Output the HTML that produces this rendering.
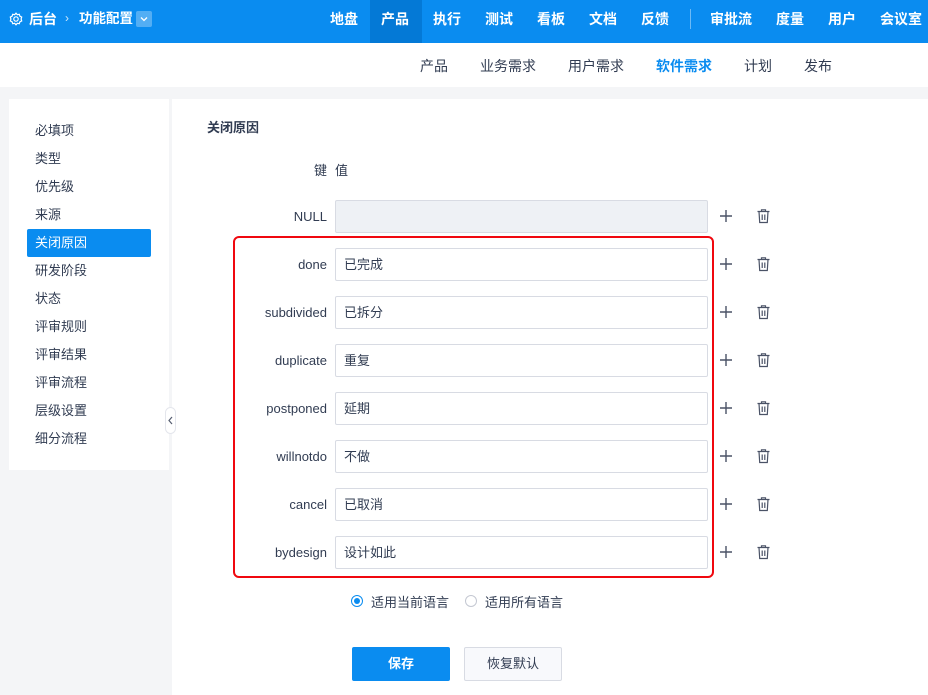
<!DOCTYPE html>
<html><head><meta charset="utf-8">
<style>
*{box-sizing:border-box;margin:0;padding:0}
body{width:928px;height:695px;overflow:hidden;background:#f4f5f7;font-family:"Liberation Sans","Noto Sans CJK SC",sans-serif;font-size:13px;color:#313c52;position:relative}
.abs{position:absolute}
.top{left:0;top:0;width:928px;height:43px;background:#0a8cf0;color:#fff}
.t{position:absolute;top:0;height:43px;line-height:38px;font-size:14px;font-weight:bold;transform:translateX(-50%);white-space:nowrap}
.sub{left:0;top:43px;width:928px;height:44px;background:#fff}
.s{position:absolute;top:0;line-height:46px;font-size:14px;transform:translateX(-50%);color:#313c52;white-space:nowrap}
.side{left:9px;top:99px;width:160px;height:371px;background:#fff}
.si{position:absolute;left:26px;font-size:13px;line-height:20px}
.main{left:172px;top:99px;width:756px;height:596px;background:#fff}
.lbl{position:absolute;right:601px;font-size:13px;text-align:right;line-height:33px;height:33px}
.inp{position:absolute;left:335px;width:373px;height:33px;border:1px solid #d8dbe3;border-radius:2px;padding-left:8px;line-height:31px;font-size:13px;background:#fff}
.plus{position:absolute;left:719px;width:14px;height:14px}
.trash{position:absolute;left:756px;width:15px;height:16px}
</style></head><body>
<div class="abs top">
  <svg class="abs" style="left:9px;top:12px" width="14" height="14" viewBox="0 0 14 14" fill="none" stroke="#fff" stroke-width="1.2"><circle cx="7" cy="7" r="2.2"/><path d="M7 1.2l1.3 1.5 2-.4.6 1.9 1.8.9-.6 1.9.6 1.9-1.8.9-.6 1.9-2-.4L7 12.8 5.7 11.3l-2 .4-.6-1.9-1.8-.9.6-1.9-.6-1.9 1.8-.9.6-1.9 2 .4z"/></svg>
  <div class="abs" style="left:29px;top:0;line-height:38px;font-size:14px;font-weight:bold">后台</div>
  <div class="abs" style="left:65px;top:0;line-height:37px;font-size:12px;opacity:.8">&#x203A;</div>
  <div class="abs" style="left:79px;top:0;line-height:38px;font-size:13.5px;font-weight:bold">功能配置</div>
  <div class="abs" style="left:136px;top:11px;width:16px;height:16px;background:rgba(255,255,255,.3);border-radius:2px"><svg width="16" height="16" viewBox="0 0 16 16"><path d="M5 6.5l3 3 3-3" stroke="#fff" stroke-width="1.3" fill="none"/></svg></div>
  <div class="abs" style="left:370px;top:0;width:52px;height:43px;background:#0479d6"></div>
  <div class="t" style="left:344px">地盘</div>
  <div class="t" style="left:395px">产品</div>
  <div class="t" style="left:447px">执行</div>
  <div class="t" style="left:499px">测试</div>
  <div class="t" style="left:551px">看板</div>
  <div class="t" style="left:603px">文档</div>
  <div class="t" style="left:655px">反馈</div>
  <div class="abs" style="left:690px;top:9px;width:1px;height:20px;background:rgba(255,255,255,.4)"></div>
  <div class="t" style="left:731px">审批流</div>
  <div class="t" style="left:790px">度量</div>
  <div class="t" style="left:842px">用户</div>
  <div class="t" style="left:901px">会议室</div>
</div>
<div class="abs sub">
  <div class="s" style="left:434px">产品</div>
  <div class="s" style="left:508px">业务需求</div>
  <div class="s" style="left:596px">用户需求</div>
  <div class="s" style="left:684px;color:#0a8cf0;font-weight:bold">软件需求</div>
  <div class="s" style="left:758px">计划</div>
  <div class="s" style="left:818px">发布</div>
</div>
<div class="abs side">
  <div class="si" style="top:22px">必填项</div>
  <div class="si" style="top:50px">类型</div>
  <div class="si" style="top:78px">优先级</div>
  <div class="si" style="top:106px">来源</div>
  <div class="abs" style="left:18px;top:130px;width:124px;height:28px;background:#0a8cf0;border-radius:2px"></div>
  <div class="si" style="top:134px;color:#fff">关闭原因</div>
  <div class="si" style="top:162px">研发阶段</div>
  <div class="si" style="top:190px">状态</div>
  <div class="si" style="top:218px">评审规则</div>
  <div class="si" style="top:246px">评审结果</div>
  <div class="si" style="top:274px">评审流程</div>
  <div class="si" style="top:302px">层级设置</div>
  <div class="si" style="top:330px">细分流程</div>
</div>
<div class="abs main"></div>
<div class="abs" style="left:165px;top:407px;width:11px;height:27px;border:1px solid #e4e6ec;border-radius:6px;background:#fff"><svg width="9" height="25" viewBox="0 0 9 25"><path d="M6 9l-3 3.5 3 3.5" stroke="#555d70" stroke-width="1.2" fill="none"/></svg></div>
<div class="abs" style="left:207px;top:117px;font-weight:bold;font-size:13px">关闭原因</div>
<div class="abs" style="left:314px;top:160px">键</div>
<div class="abs" style="left:335px;top:160px">值</div>
<div class="abs" style="left:233px;top:236px;width:481px;height:342px;border:2px solid #f0080f;border-radius:6px"></div>
<div id="rows"></div>
<div class="abs" style="left:351px;top:595px;width:12px;height:12px;border:1px solid #0a8cf0;border-radius:50%"><div style="margin:2px;width:6px;height:6px;border-radius:50%;background:#0a8cf0"></div></div>
<div class="abs" style="left:371px;top:592px">适用当前语言</div>
<div class="abs" style="left:465px;top:595px;width:12px;height:12px;border:1px solid #c4c8d2;border-radius:50%"></div>
<div class="abs" style="left:485px;top:592px">适用所有语言</div>
<div class="abs" style="left:352px;top:647px;width:98px;height:34px;background:#0a8cf0;border-radius:2px;color:#fff;text-align:center;line-height:34px;font-weight:bold">保存</div>
<div class="abs" style="left:464px;top:647px;width:98px;height:34px;background:#f8f9fc;border:1px solid #d8dbe3;border-radius:2px;text-align:center;line-height:32px">恢复默认</div>
<script>
var rows=[["NULL",""],["done","已完成"],["subdivided","已拆分"],["duplicate","重复"],["postponed","延期"],["willnotdo","不做"],["cancel","已取消"],["bydesign","设计如此"]];
var h="";
rows.forEach(function(r,i){var c=216+48*i;
h+='<div class="lbl" style="top:'+(c-16)+'px">'+r[0]+'</div>';
h+='<div class="inp" style="top:'+(c-16)+'px;'+(i==0?'background:#eef1f5;':'')+'">'+r[1]+'</div>';
h+='<svg class="plus" style="top:'+(c-7)+'px" viewBox="0 0 14 14"><path d="M7 1v12M1 7h12" stroke="#4a5266" stroke-width="1.4"/></svg>';
h+='<svg class="trash" style="top:'+(c-8)+'px" viewBox="0 0 15 16" fill="none" stroke="#4a5266" stroke-width="1.2"><path d="M1.5 3.5h12M5.5 3.5V1.8h4v1.7M3 3.5l.7 11h7.6l.7-11M6.2 6.5v5.5M8.8 6.5v5.5"/></svg>';
});
document.getElementById("rows").innerHTML=h;
</script>
</body></html>
